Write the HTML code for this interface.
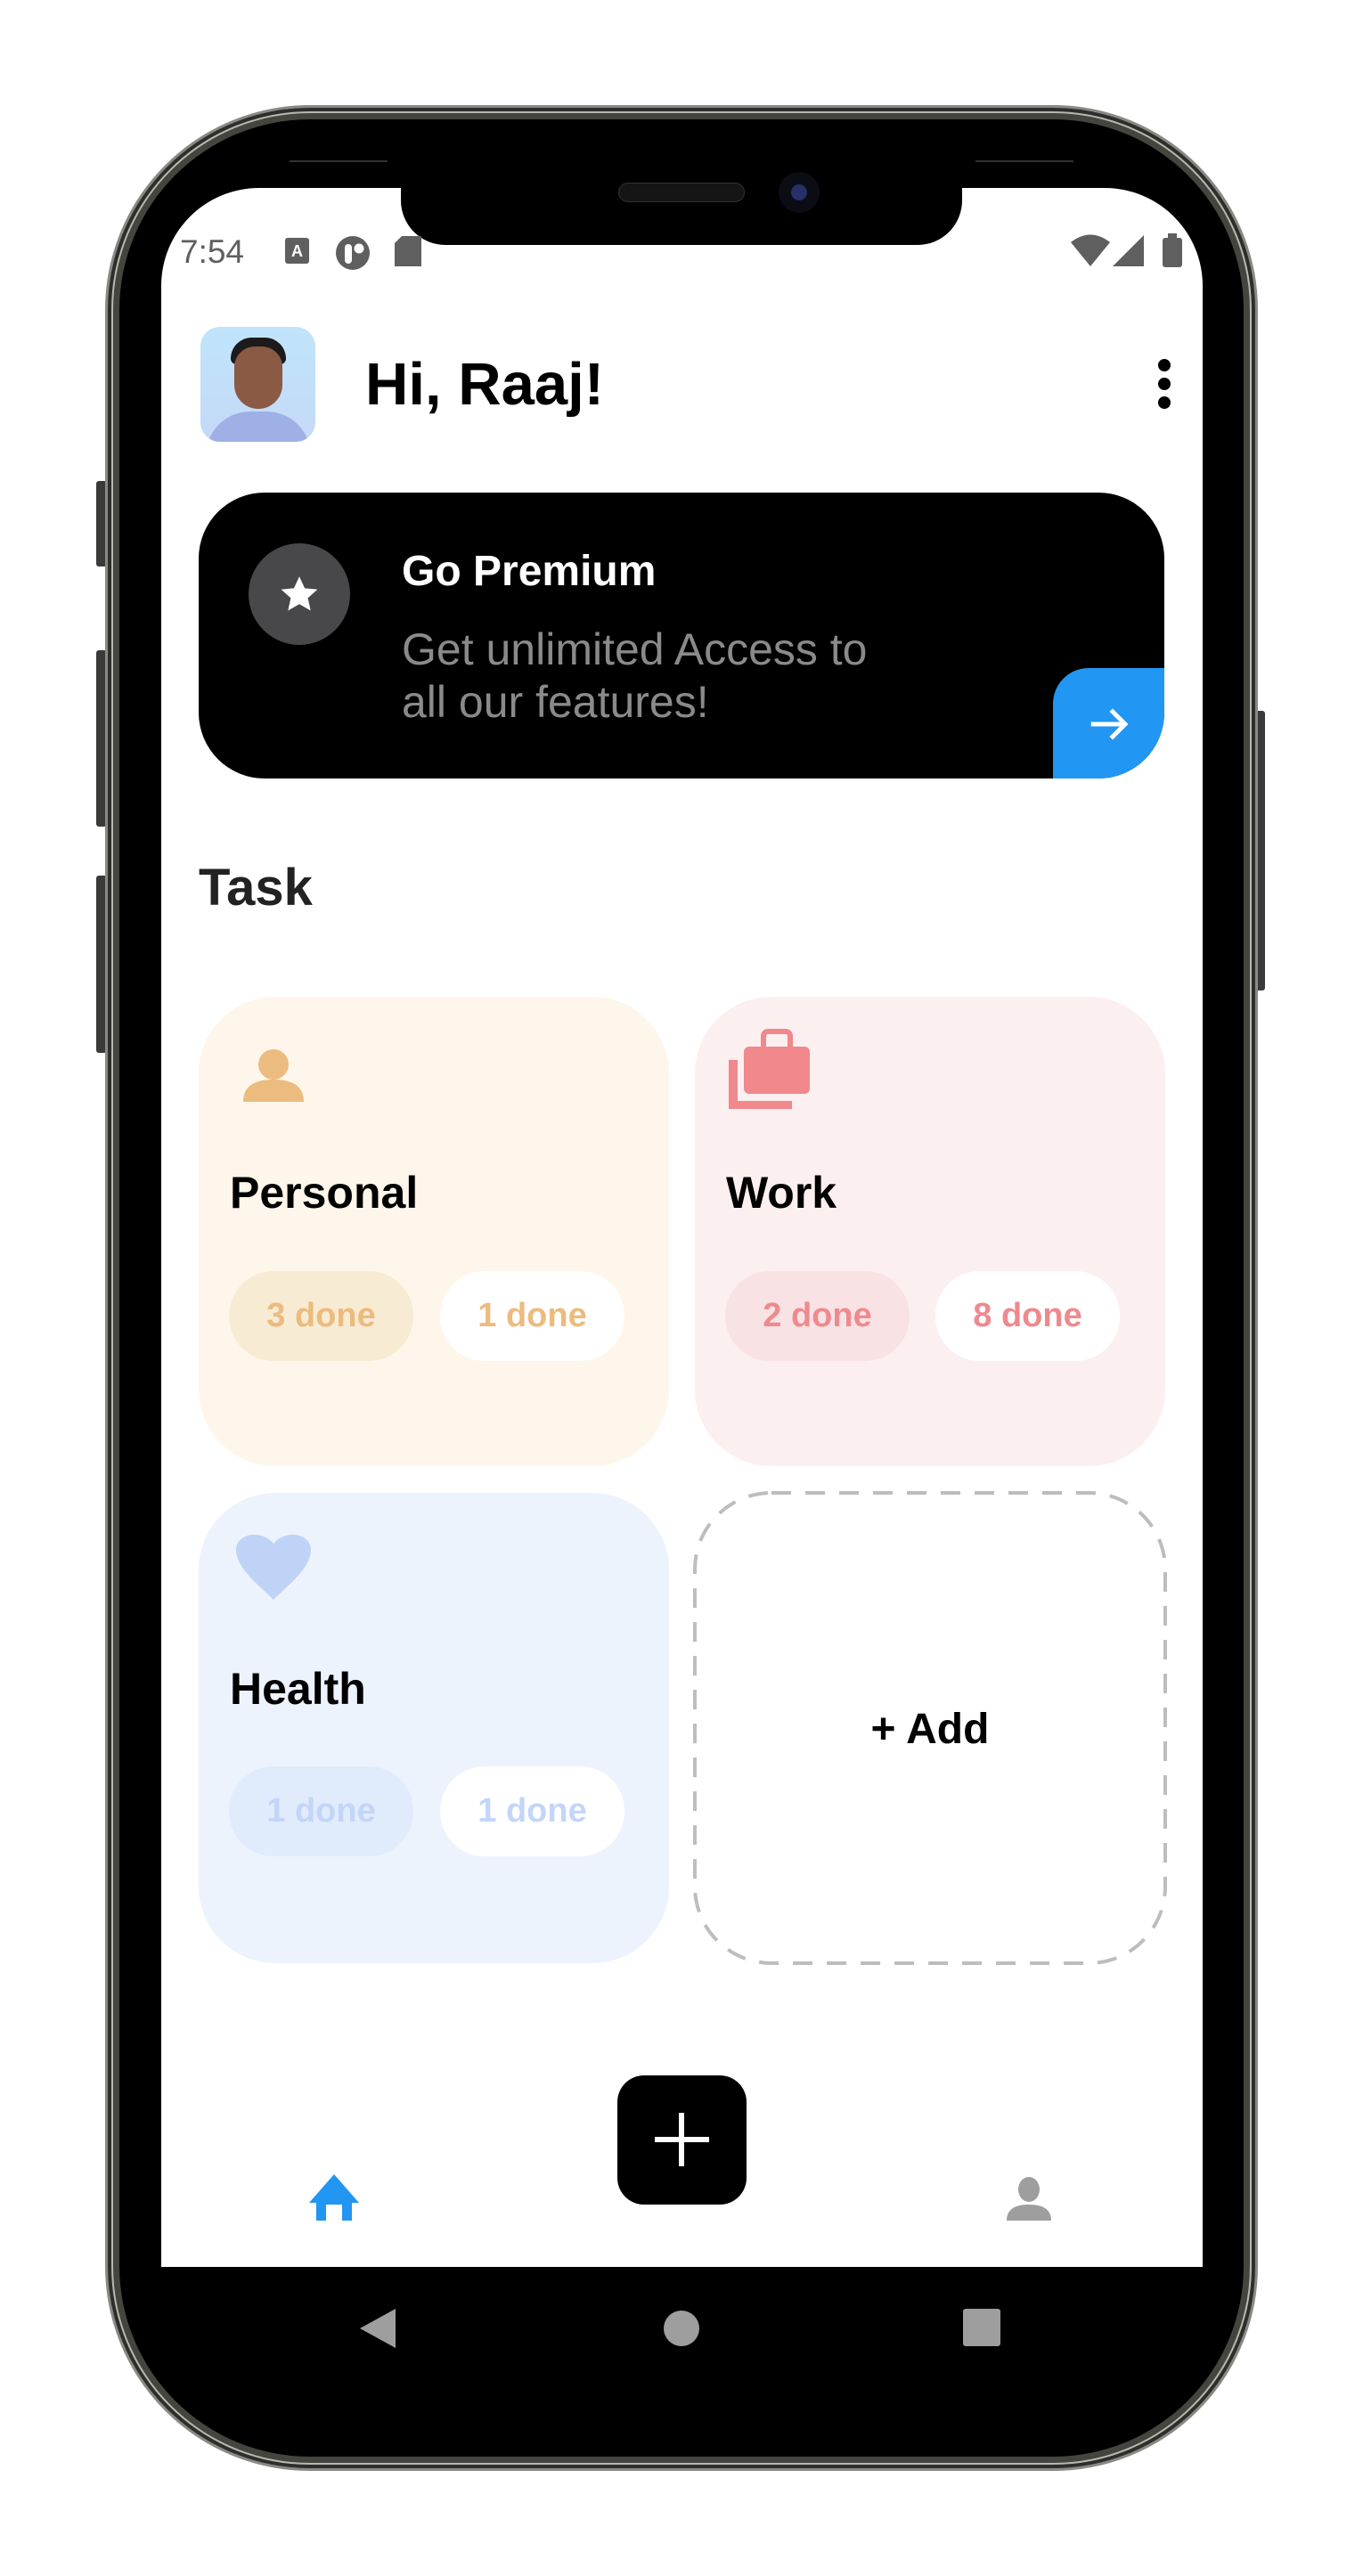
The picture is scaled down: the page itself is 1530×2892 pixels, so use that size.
<!DOCTYPE html>
<html><head><meta charset="utf-8"><style>
*{margin:0;padding:0;box-sizing:border-box}
body{width:1530px;height:2892px;background:#fff;position:relative;overflow:hidden;font-family:"Liberation Sans",Roboto,sans-serif}
.a{position:absolute}
.card{position:absolute;border-radius:86px}
.pill{position:absolute;height:101px;width:207px;border-radius:50px;font-size:38px;font-weight:bold;text-align:center;line-height:101px}
.lbl{position:absolute;font-size:50px;font-weight:bold;color:#000}
</style></head><body>
<!-- side buttons -->
<div class="a" style="left:108px;top:540px;width:12px;height:96px;background:#3a3a38;border-radius:3px"></div>
<div class="a" style="left:108px;top:730px;width:12px;height:198px;background:#3a3a38;border-radius:3px"></div>
<div class="a" style="left:108px;top:983px;width:12px;height:199px;background:#3a3a38;border-radius:3px"></div>
<div class="a" style="left:1408px;top:798px;width:12px;height:314px;background:#3a3a38;border-radius:3px"></div>
<!-- frame -->
<div class="a" style="left:118px;top:118px;width:1294px;height:2656px;border-radius:230px;background:#2e2e2c;border:3px solid #8a8a84"></div>
<div class="a" style="left:125px;top:125px;width:1280px;height:2642px;border-radius:223px;background:#45453f;border:2px solid #b8b8b0"></div>
<div class="a" style="left:134px;top:134px;width:1262px;height:2624px;border-radius:214px;background:#000"></div>
<!-- top speaker lines -->
<div class="a" style="left:325px;top:180px;width:110px;height:2px;background:#333"></div>
<div class="a" style="left:1095px;top:180px;width:110px;height:2px;background:#333"></div>
<!-- screen -->
<div class="a" style="left:181px;top:211px;width:1169px;height:2334px;background:#fff;border-radius:110px 110px 0 0"></div>
<!-- notch -->
<div class="a" style="left:450px;top:190px;width:630px;height:85px;background:#000;border-radius:0 0 50px 50px"></div>
<div class="a" style="left:694px;top:205px;width:142px;height:22px;background:#151515;border-radius:11px;border:1px solid #333"></div>
<div class="a" style="left:874px;top:193px;width:46px;height:46px;background:#0c0c14;border-radius:50%"></div>
<div class="a" style="left:888px;top:207px;width:18px;height:18px;background:#28306a;border-radius:50%"></div>
<!-- status bar -->
<div class="a" style="left:202px;top:263px;font-size:37px;color:#5f5f5f;line-height:40px">7:54</div>
<svg class="a" style="left:318px;top:265px" width="160" height="40" viewBox="318 265 160 40">
<rect x="320" y="267" width="27" height="29" rx="3" fill="#5f5f5f"/>
<text x="333.5" y="288" font-size="18" font-weight="bold" fill="#fff" text-anchor="middle" font-family="Liberation Sans">A</text>
<circle cx="396" cy="284" r="19" fill="#5f5f5f"/>
<rect x="387" y="274" width="8" height="22" rx="4" fill="#fff"/>
<circle cx="403" cy="279" r="5.5" fill="#fff"/>
<path d="M451 265 H473 V299 H443 V273 Z" fill="#5f5f5f"/>
</svg>
<svg class="a" style="left:1200px;top:262px" width="130" height="40" viewBox="1200 262 130 40">
<path d="M1202 272 Q1224 255 1246 272 L1224 299 Z" fill="#5f5f5f"/>
<path d="M1284 264 V299 H1249 Z" fill="#5f5f5f"/>
<rect x="1305" y="267" width="22" height="33" rx="3" fill="#5f5f5f"/>
<rect x="1311" y="262" width="10" height="6" fill="#5f5f5f"/>
</svg>
<!-- header -->
<div class="a" style="left:225px;top:367px;width:129px;height:129px;border-radius:22px;background:linear-gradient(#bfe4fb,#c5d9f6);overflow:hidden">
<div class="a" style="left:34px;top:12px;width:62px;height:30px;background:#1c1a1a;border-radius:30px 30px 8px 8px"></div>
<div class="a" style="left:38px;top:22px;width:54px;height:70px;background:#8a5a44;border-radius:24px 24px 28px 28px"></div>
<div class="a" style="left:6px;top:95px;width:118px;height:50px;background:#9fb0e6;border-radius:50px 50px 0 0"></div>
</div>
<div class="a" style="left:410px;top:392px;font-size:67px;font-weight:bold;color:#000;line-height:80px">Hi, Raaj!</div>
<div class="a" style="left:1300px;top:403px;width:14px;height:14px;border-radius:50%;background:#000"></div>
<div class="a" style="left:1300px;top:424px;width:14px;height:14px;border-radius:50%;background:#000"></div>
<div class="a" style="left:1300px;top:445px;width:14px;height:14px;border-radius:50%;background:#000"></div>
<!-- premium -->
<div class="a" style="left:223px;top:553px;width:1084px;height:321px;border-radius:74px;background:#000;overflow:hidden">
<div class="a" style="left:959px;top:197px;width:125px;height:124px;background:#2196f3;border-radius:40px 0 40px 0"></div>
</div>
<div class="a" style="left:279px;top:610px;width:114px;height:114px;border-radius:50%;background:#48484a"></div>
<svg class="a" style="left:311px;top:642px" width="50" height="50" viewBox="0 0 24 24"><path d="M12 2.5l2.9 6.3 6.9.7-5.2 4.6 1.5 6.8L12 17.4l-6.1 3.5 1.5-6.8L2.2 9.5l6.9-.7z" fill="#fff"/></svg>
<div class="a" style="left:451px;top:614px;font-size:48px;font-weight:bold;color:#fff;line-height:56px">Go Premium</div>
<div class="a" style="left:451px;top:700px;font-size:50px;color:#8a8a8a;line-height:59px">Get unlimited Access to<br>all our features!</div>
<svg class="a" style="left:1218px;top:786px" width="54" height="54" viewBox="0 0 24 24"><path d="M3 12h17M13 5l7 7-7 7" stroke="#fff" stroke-width="2.2" fill="none"/></svg>
<!-- Task -->
<div class="a" style="left:223px;top:962px;font-size:58px;font-weight:bold;color:#222;line-height:70px">Task</div>
<!-- personal -->
<div class="card" style="left:223px;top:1119px;width:528px;height:527px;background:#fef6ea"></div>
<svg class="a" style="left:270px;top:1170px" width="74" height="70" viewBox="270 1170 74 70"><circle cx="307" cy="1195" r="17" fill="#ecbb7e"/><path d="M273 1237 Q273 1212 307 1212 Q341 1212 341 1237 Z" fill="#ecbb7e"/></svg>
<div class="lbl" style="left:258px;top:1310px">Personal</div>
<div class="pill" style="left:257px;top:1427px;background:#f8ebd3;color:#ecbb7e">3 done</div>
<div class="pill" style="left:494px;top:1427px;background:#fff;color:#ecbb7e">1 done</div>
<!-- work -->
<div class="card" style="left:780px;top:1119px;width:528px;height:527px;background:#fcefef"></div>
<svg class="a" style="left:815px;top:1155px" width="100" height="95" viewBox="815 1155 100 95">
<path d="M818 1190 V1245 H889 V1236 H828 V1190 Z" fill="#f0888c"/>
<rect x="835" y="1175" width="74" height="53" rx="6" fill="#f0888c"/>
<rect x="857" y="1158" width="30" height="22" rx="5" fill="none" stroke="#f0888c" stroke-width="6"/>
</svg>
<div class="lbl" style="left:815px;top:1310px">Work</div>
<div class="pill" style="left:814px;top:1427px;background:#f9e2e4;color:#ee8a8e">2 done</div>
<div class="pill" style="left:1050px;top:1427px;background:#fff;color:#ee8a8e">8 done</div>
<!-- health -->
<div class="card" style="left:223px;top:1676px;width:528px;height:528px;background:#edf3fd"></div>
<svg class="a" style="left:262px;top:1718px" width="92" height="84" viewBox="262 1718 92 84"><path d="M307 1796 C296 1784 265 1762 265 1740 C265 1722 293 1716 307 1733 C321 1716 349 1722 349 1740 C349 1762 318 1784 307 1796 Z" fill="#bfd3f7"/></svg>
<div class="lbl" style="left:258px;top:1867px">Health</div>
<div class="pill" style="left:257px;top:1983px;background:#e0ebfc;color:#c3d5f8">1 done</div>
<div class="pill" style="left:494px;top:1983px;background:#fff;color:#c3d5f8">1 done</div>
<!-- add -->
<svg class="a" style="left:777px;top:1673px" width="534" height="534"><rect x="3" y="3" width="528" height="528" rx="86" fill="none" stroke="#bdbdbd" stroke-width="4" stroke-dasharray="22 16"/></svg>
<div class="a" style="left:780px;top:1912px;width:528px;text-align:center;font-size:48px;font-weight:bold;color:#000;line-height:60px">+ Add</div>
<!-- bottom bar -->
<div class="a" style="left:693px;top:2330px;width:145px;height:145px;border-radius:30px;background:#000"></div>
<div class="a" style="left:735px;top:2399px;width:61px;height:6px;background:#fff"></div>
<div class="a" style="left:762px;top:2372px;width:6px;height:60px;background:#fff"></div>
<svg class="a" style="left:345px;top:2440px" width="60" height="55" viewBox="345 2440 60 55"><path d="M375 2441 L403 2473 H395 V2493 H384 V2475 H366 V2493 H355 V2473 H347 Z" fill="#2196f3"/></svg>
<svg class="a" style="left:1128px;top:2440px" width="56" height="56" viewBox="1128 2440 56 56"><ellipse cx="1155" cy="2458" rx="12" ry="14" fill="#9e9e9e"/><path d="M1130 2493 Q1130 2475 1155 2475 Q1180 2475 1180 2493 Z" fill="#9e9e9e"/></svg>
<!-- nav -->
<svg class="a" style="left:400px;top:2588px" width="730" height="52" viewBox="400 2588 730 52">
<path d="M444 2592 V2636 L404 2614 Z" fill="#9e9e9e"/>
<ellipse cx="765" cy="2614" rx="20" ry="20" fill="#9e9e9e"/>
<rect x="1081" y="2592" width="42" height="42" rx="3" fill="#9e9e9e"/>
</svg>
</body></html>
